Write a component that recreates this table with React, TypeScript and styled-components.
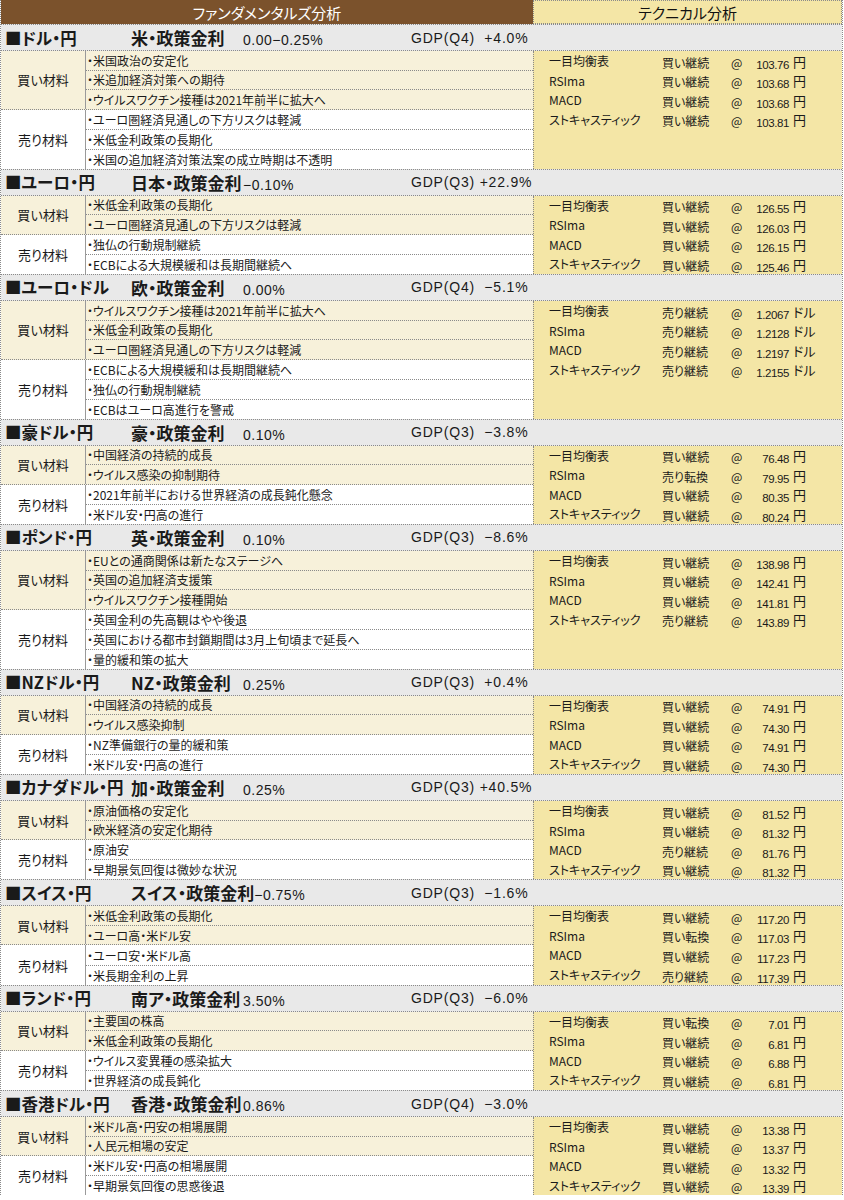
import React from 'react';
import styled, { createGlobalStyle } from 'styled-components';

/* ---------------------------------- Data ---------------------------------- */

type Tech = { name: string; signal: string; price: string; unit: string };
type Pair = {
  pair: string;
  policy: string;
  rate: string;
  gdp: string;
  buy: string[];
  sell: string[];
  tech: Tech[];
};

const TECH_NAMES = ['一目均衡表', 'RSIma', 'MACD', 'ストキャスティック'];

const tech = (rows: [string, string][], unit = '円'): Tech[] =>
  rows.map(([signal, price], i) => ({ name: TECH_NAMES[i], signal, price, unit }));

const pairs: Pair[] = [
  {
    pair: '■ドル・円',
    policy: '米・政策金利',
    rate: '0.00−0.25%',
    gdp: 'GDP(Q4)  +4.0%',
    buy: ['・米国政治の安定化', '・米追加経済対策への期待', '・ウイルスワクチン接種は2021年前半に拡大へ'],
    sell: ['・ユーロ圏経済見通しの下方リスクは軽減', '・米低金利政策の長期化', '・米国の追加経済対策法案の成立時期は不透明'],
    tech: tech([['買い継続', '103.76'], ['買い継続', '103.68'], ['買い継続', '103.68'], ['買い継続', '103.81']]),
  },
  {
    pair: '■ユーロ・円',
    policy: '日本・政策金利',
    rate: '−0.10%',
    gdp: 'GDP(Q3) +22.9%',
    buy: ['・米低金利政策の長期化', '・ユーロ圏経済見通しの下方リスクは軽減'],
    sell: ['・独仏の行動規制継続', '・ECBによる大規模緩和は長期間継続へ'],
    tech: tech([['買い継続', '126.55'], ['買い継続', '126.03'], ['買い継続', '126.15'], ['買い継続', '125.46']]),
  },
  {
    pair: '■ユーロ・ドル',
    policy: '欧・政策金利',
    rate: '0.00%',
    gdp: 'GDP(Q4)  −5.1%',
    buy: ['・ウイルスワクチン接種は2021年前半に拡大へ', '・米低金利政策の長期化', '・ユーロ圏経済見通しの下方リスクは軽減'],
    sell: ['・ECBによる大規模緩和は長期間継続へ', '・独仏の行動規制継続', '・ECBはユーロ高進行を警戒'],
    tech: tech([['売り継続', '1.2067'], ['売り継続', '1.2128'], ['売り継続', '1.2197'], ['売り継続', '1.2155']], 'ドル'),
  },
  {
    pair: '■豪ドル・円',
    policy: '豪・政策金利',
    rate: '0.10%',
    gdp: 'GDP(Q3)  −3.8%',
    buy: ['・中国経済の持続的成長', '・ウイルス感染の抑制期待'],
    sell: ['・2021年前半における世界経済の成長鈍化懸念', '・米ドル安・円高の進行'],
    tech: tech([['買い継続', '76.48'], ['売り転換', '79.95'], ['買い継続', '80.35'], ['買い継続', '80.24']]),
  },
  {
    pair: '■ポンド・円',
    policy: '英・政策金利',
    rate: '0.10%',
    gdp: 'GDP(Q3)  −8.6%',
    buy: ['・EUとの通商関係は新たなステージへ', '・英国の追加経済支援策', '・ウイルスワクチン接種開始'],
    sell: ['・英国金利の先高観はやや後退', '・英国における都市封鎖期間は3月上旬頃まで延長へ', '・量的緩和策の拡大'],
    tech: tech([['買い継続', '138.98'], ['買い継続', '142.41'], ['買い継続', '141.81'], ['売り継続', '143.89']]),
  },
  {
    pair: '■NZドル・円',
    policy: 'NZ・政策金利',
    rate: '0.25%',
    gdp: 'GDP(Q3)  +0.4%',
    buy: ['・中国経済の持続的成長', '・ウイルス感染抑制'],
    sell: ['・NZ準備銀行の量的緩和策', '・米ドル安・円高の進行'],
    tech: tech([['買い継続', '74.91'], ['買い継続', '74.30'], ['買い継続', '74.91'], ['買い継続', '74.30']]),
  },
  {
    pair: '■カナダドル・円',
    policy: '加・政策金利',
    rate: '0.25%',
    gdp: 'GDP(Q3) +40.5%',
    buy: ['・原油価格の安定化', '・欧米経済の安定化期待'],
    sell: ['・原油安', '・早期景気回復は微妙な状況'],
    tech: tech([['買い継続', '81.52'], ['買い継続', '81.32'], ['売り継続', '81.76'], ['買い継続', '81.32']]),
  },
  {
    pair: '■スイス・円',
    policy: 'スイス・政策金利',
    rate: '−0.75%',
    gdp: 'GDP(Q3)  −1.6%',
    buy: ['・米低金利政策の長期化', '・ユーロ高・米ドル安'],
    sell: ['・ユーロ安・米ドル高', '・米長期金利の上昇'],
    tech: tech([['買い継続', '117.20'], ['買い転換', '117.03'], ['買い継続', '117.23'], ['売り継続', '117.39']]),
  },
  {
    pair: '■ランド・円',
    policy: '南ア・政策金利',
    rate: '3.50%',
    gdp: 'GDP(Q3)  −6.0%',
    buy: ['・主要国の株高', '・米低金利政策の長期化'],
    sell: ['・ウイルス変異種の感染拡大', '・世界経済の成長鈍化'],
    tech: tech([['買い転換', '7.01'], ['買い継続', '6.81'], ['買い継続', '6.88'], ['買い継続', '6.81']]),
  },
  {
    pair: '■香港ドル・円',
    policy: '香港・政策金利',
    rate: '0.86%',
    gdp: 'GDP(Q4)  −3.0%',
    buy: ['・米ドル高・円安の相場展開', '・人民元相場の安定'],
    sell: ['・米ドル安・円高の相場展開', '・早期景気回復の思惑後退'],
    tech: tech([['買い継続', '13.38'], ['買い継続', '13.37'], ['買い継続', '13.32'], ['買い継続', '13.39']]),
  },
];

/* --------------------------------- Styles --------------------------------- */

const ROW = 19.6;
const DOT = '1px dotted #8a8a8a';

const GlobalStyle = createGlobalStyle`
  body {
    margin: 0;
    background: #ffffff;
    font-family: "Noto Sans CJK JP", "Noto Sans", sans-serif;
    font-feature-settings: "palt";
    color: #1a1a1a;
  }
`;

const Sheet = styled.div`
  width: 843px;
  border-left: ${DOT};
  border-right: ${DOT};
  box-sizing: border-box;
`;

const TopHead = styled.div`
  display: flex;
  height: 24px;
`;

const HeadCell = styled.div<{ $tech?: boolean }>`
  display: flex;
  align-items: center;
  justify-content: center;
  box-sizing: border-box;
  flex: ${(p) => (p.$tech ? '1' : '0 0 532px')};
  background: ${(p) => (p.$tech ? '#f4e6a6' : '#7b522c')};
  color: ${(p) => (p.$tech ? '#111111' : '#ffffff')};
  border: ${(p) => (p.$tech ? DOT : 'none')};
  font-size: 15px;
  line-height: 1;
`;

const SectionHead = styled.div`
  display: flex;
  align-items: center;
  height: 27px;
  box-sizing: border-box;
  padding-left: 4px;
  background: #e9e9e9;
  border-top: ${DOT};
  border-bottom: ${DOT};
  white-space: nowrap;
`;

const PairName = styled.div`
  flex: 0 0 126px;
  font-size: 16.5px;
  font-weight: 700;
`;

const PolicyBlock = styled.div`
  flex: 0 0 280px;
  display: flex;
  align-items: baseline;
`;

const Policy = styled.div`
  min-width: 112px;
  font-size: 17px;
  font-weight: 700;
`;

const Rate = styled.div`
  font-size: 14px;
  font-family: "Liberation Sans", "Noto Sans CJK JP", sans-serif;
  letter-spacing: 0.5px;
`;

const Gdp = styled.div`
  font-size: 14px;
  font-family: "Liberation Sans", "Noto Sans CJK JP", sans-serif;
  letter-spacing: 0.8px;
  white-space: pre;
`;

const Body = styled.div`
  display: flex;
`;

const Fund = styled.div`
  flex: 0 0 532px;
  display: flex;
  flex-direction: column;
`;

const Group = styled.div<{ $buy?: boolean; $rows: number }>`
  display: flex;
  height: ${(p) => p.$rows * ROW}px;
  box-sizing: border-box;
  background: ${(p) => (p.$buy ? '#f7f1da' : '#ffffff')};
  border-bottom: ${DOT};
  &:last-child {
    border-bottom: none;
  }
`;

const GroupLabel = styled.div`
  flex: 0 0 85px;
  display: flex;
  align-items: center;
  justify-content: center;
  border-right: 1px solid #9a9a9a;
  font-size: 13px;
  box-sizing: border-box;
`;

const Items = styled.div`
  flex: 1;
  display: flex;
  flex-direction: column;
`;

const Item = styled.div`
  flex: 1;
  display: flex;
  align-items: center;
  padding-left: 1px;
  font-size: 12px;
  white-space: nowrap;
  border-bottom: ${DOT};
  box-sizing: border-box;
  &:last-child {
    border-bottom: none;
  }
`;

const TechPanel = styled.div`
  flex: 1;
  background: #f4e6a6;
  border-left: ${DOT};
  padding-left: 15px;
`;

const TechRow = styled.div`
  height: ${ROW}px;
  display: grid;
  grid-template-columns: 113px 69px 20px 38px auto;
  align-items: center;
  font-size: 12px;
  white-space: nowrap;
`;

const TechName = styled.span`
  align-self: start;
  padding-top: 1px;
`;

const TechVal = styled.span<{ $right?: boolean }>`
  align-self: end;
  text-align: ${(p) => (p.$right ? 'right' : 'left')};
`;

const Price = styled(TechVal)`
  font-family: "Liberation Sans", sans-serif;
  font-size: 11.5px;
  letter-spacing: -0.4px;
`;

const Unit = styled(TechVal)`
  padding-left: 4px;
  font-size: 13px;
`;

/* ------------------------------- Components ------------------------------- */

const Section = ({ data }: { data: Pair }) => (
  <>
    <SectionHead>
      <PairName>{data.pair}</PairName>
      <PolicyBlock>
        <Policy>{data.policy}</Policy>
        <Rate>{data.rate}</Rate>
      </PolicyBlock>
      <Gdp>{data.gdp}</Gdp>
    </SectionHead>
    <Body>
      <Fund>
        <Group $buy $rows={data.buy.length}>
          <GroupLabel>買い材料</GroupLabel>
          <Items>
            {data.buy.map((t) => (
              <Item key={t}>{t}</Item>
            ))}
          </Items>
        </Group>
        <Group $rows={data.sell.length}>
          <GroupLabel>売り材料</GroupLabel>
          <Items>
            {data.sell.map((t) => (
              <Item key={t}>{t}</Item>
            ))}
          </Items>
        </Group>
      </Fund>
      <TechPanel>
        {data.tech.map((t) => (
          <TechRow key={t.name}>
            <TechName>{t.name}</TechName>
            <TechVal>{t.signal}</TechVal>
            <TechVal>@</TechVal>
            <Price $right>{t.price}</Price>
            <Unit>{t.unit}</Unit>
          </TechRow>
        ))}
      </TechPanel>
    </Body>
  </>
);

const App = () => (
  <>
    <GlobalStyle />
    <Sheet>
      <TopHead>
        <HeadCell>ファンダメンタルズ分析</HeadCell>
        <HeadCell $tech>テクニカル分析</HeadCell>
      </TopHead>
      {pairs.map((p) => (
        <Section key={p.pair} data={p} />
      ))}
    </Sheet>
  </>
);

export default App;
